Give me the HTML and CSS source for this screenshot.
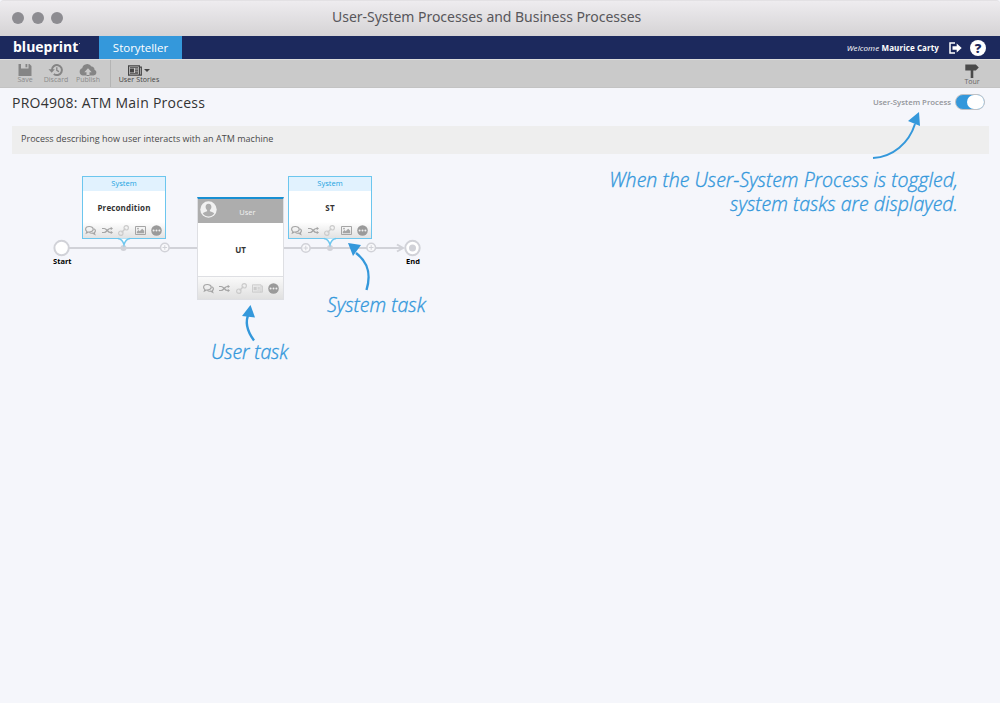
FILE: index.html
```
<!DOCTYPE html>
<html lang="en">
<head>
<meta charset="utf-8">
<title>User-System Processes and Business Processes</title>
<link rel="stylesheet" href="styles.css">
</head>
<body>
<svg class="defs" aria-hidden="true">
  <symbol id="chat" viewBox="0 0 11 10"><g fill="none" stroke="currentColor" stroke-width="1.200"><path d="M4.300 1C2 1 .6 2.300.6 3.800c0 1 .5 1.700 1.300 2.200L1.400 7.600 3.500 6.500C6.500 6.700 8.200 5.400 8.200 3.800S6.500 1 4.300 1z"/><path d="M8.700 3.200c1.100.4 1.700 1.100 1.700 2 0 .9-.5 1.600-1.200 2.100l.5 1.500-2-1.100c-1.400.2-2.700-.1-3.400-.8"/></g></symbol>
  <symbol id="shuffle" viewBox="0 0 11 10"><g fill="none" stroke="currentColor" stroke-width="1.200"><path d="M0 3h2.200c2.400 0 3.600 4 6 4h1.300M0 7h2.200c2.400 0 3.600-4 6-4h1.300"/></g><path fill="currentColor" d="M8.700 1.300l2.300 1.700-2.300 1.700zM8.700 5.300L11 7 8.700 8.700z"/></symbol>
  <symbol id="link" viewBox="0 0 11 11"><g fill="none" stroke="currentColor" stroke-width="1.200"><circle cx="2.800" cy="8.200" r="2.200"/><circle cx="8.200" cy="2.800" r="2.200"/><path d="M3.600 7.400l3.800-3.800" stroke-width="1.400"/></g></symbol>
  <symbol id="image" viewBox="0 0 11 10"><path fill="none" stroke="currentColor" d="M.5 1h10v8H.5z"/><path fill="currentColor" d="M1.800 7.800V6.200l1.700-1.600 1.200 1.200L7.200 3.300l2 2v2.500z"/><circle cx="3" cy="3.100" r=".9" fill="currentColor"/></symbol>
  <symbol id="dots" viewBox="0 0 11 11"><circle cx="5.500" cy="5.500" r="5.300" fill="currentColor"/><g fill="#eee"><circle cx="2.600" cy="5.500" r="1"/><circle cx="5.500" cy="5.500" r="1"/><circle cx="8.400" cy="5.500" r="1"/></g></symbol>
  <symbol id="news" viewBox="0 0 14 11"><path fill="none" stroke="currentColor" stroke-width="1.200" d="M.6 .8h10.800v9.400H.6zM11.600 2.200h1.700v8H11"/><path fill="currentColor" d="M2 3.500h4v4H2zM2 1.900h8v.8H2zM7 3.600h3v1H7zM7 5.200h3v1H7zM7 6.800h3v1H7zM2 8.300h8v.8H2z"/></symbol>
</svg>

<header class="window-bar">
  <div class="lights"><i></i><i></i><i></i></div>
  <h1 class="window-title">User-System Processes and Business Processes</h1>
</header>

<nav class="brand-bar">
  <div class="logo">blueprint<i></i></div>
  <div class="tab">Storyteller</div>
  <div class="account">
    <span class="welcome"><em>Welcome</em> <b>Maurice Carty</b></span>
    <svg class="logout" viewBox="0 0 13 12"><path d="M6 1H1v10h5" fill="none" stroke="#fff" stroke-width="1.500"/><path fill="#fff" d="M3.500 4.200h4.200V1.600L12.700 6l-5 4.400V7.800H3.500z"/></svg>
    <span class="help">?</span>
  </div>
</nav>

<div class="toolbar">
  <div class="tool save"><svg viewBox="0 0 14 12"><path fill="#858585" fill-rule="evenodd" d="M.5 0h11l2 2v10H.5zM3 0v4.500h7.500V0z"/><path fill="#858585" d="M7.500 0h1.800v3.300H7.500z"/></svg><span>Save</span></div>
  <div class="tool discard"><svg viewBox="0 0 14 12"><path fill="none" stroke="#858585" stroke-width="2" d="M2.900 6a5 5 0 1 1 1.900 4"/><path fill="#858585" d="M-.5 5.300h6.300L2.700 8.800z"/><path fill="none" stroke="#858585" stroke-width="1.300" d="M7.800 3.200v3.200l2.200 1.200"/></svg><span>Discard</span></div>
  <div class="tool publish"><svg viewBox="0 0 18 12"><path fill="#858585" d="M4 11.500A3.700 3.700 0 0 1 3.200 4.300 5 5 0 0 1 12.500 2.600a3.300 3.300 0 0 1 3 3.100A3 3 0 0 1 14.500 11.500h-4V8.300h2.200L9 4.300 5.300 8.300h2.200v3.200z"/><path fill="#858585" d="M7.500 11h3v1h-3z"/></svg><span>Publish</span></div>
  <div class="tool stories"><div class="stories-icon"><svg viewBox="0 0 14 11"><use href="#news"/></svg><i class="caret"></i></div><span>User Stories</span></div>
  <div class="tool tour"><svg viewBox="0 0 14 14"><path fill="#4b4b4b" d="M.3.500h10.500l3 2.900-3 3H.3zM5.700 6h2.600v8H5.700z"/></svg><span>Tour</span></div>
</div>

<main class="page">
  <div class="heading">
    <h2>PRO4908: ATM Main Process</h2>
    <div class="switch-row"><span>User-System Process</span><div class="switch"><i></i></div></div>
  </div>
  <p class="description">Process describing how user interacts with an ATM machine</p>

  <section class="canvas">
    <svg class="wires" viewBox="0 0 1000 549">
      <g fill="none" stroke="#d1d2d8" stroke-width="2">
        <path d="M69 94H403M397 90.500l6 3.500-6 3.500"/>
        <g fill="#f9f9fb" stroke-width="1.600"><circle cx="164.800" cy="93.500" r="4.300"/><circle cx="305.800" cy="94" r="4.300"/><circle cx="371.200" cy="93.500" r="4.300"/></g>
        <path stroke-width="1" d="M162.500 93.500h4.600M164.800 91.200v4.600M303.500 94h4.600M305.800 91.700v4.600M368.900 93.500h4.600M371.200 91.200v4.600"/>
        <circle cx="61.600" cy="94" r="7.200" fill="#fff"/><circle cx="412.500" cy="94" r="7.200" fill="#fff"/>
      </g>
      <g fill="#d1d2d8"><circle cx="123.500" cy="94" r="3"/><circle cx="330" cy="94" r="3"/><circle cx="412.500" cy="94" r="3.500"/></g>
    </svg>
    <span class="label start">Start</span>
    <span class="label end">End</span>

    <article class="system-task precondition">
      <header>System</header><strong>Precondition</strong>
      <footer><svg><use href="#chat"/></svg><svg><use href="#shuffle"/></svg><svg class="faint"><use href="#link"/></svg><svg><use href="#image"/></svg><svg class="more"><use href="#dots"/></svg></footer>
      <svg class="tail" viewBox="0 0 14 8"><path fill="#fff" stroke="#6cc6ee" stroke-width="1.400" d="M1 .5C4 1 6 3 7 6.800 8 3 10 1 13 .5"/></svg>
    </article>
    <article class="user-task">
      <header><svg class="avatar" viewBox="0 0 17 17"><circle cx="8.500" cy="8.500" r="8.200" fill="#f1f1f1"/><path fill="#adadad" d="M8.500 2.800c-2 0-3 1.400-2.900 3.200.1 1.400.6 2.400 1.500 3.100v1.100c-2 .8-3.600 1-4.300 2.400a7 7 0 0 0 11.400 0c-.7-1.400-2.300-1.600-4.300-2.400V9.100c.9-.7 1.400-1.700 1.500-3.100.1-1.800-.9-3.200-2.900-3.200z"/></svg>User</header>
      <strong>UT</strong>
      <footer><svg><use href="#chat"/></svg><svg><use href="#shuffle"/></svg><svg class="faint"><use href="#link"/></svg><svg class="faint"><use href="#news"/></svg><svg class="more"><use href="#dots"/></svg></footer>
    </article>
    <article class="system-task st">
      <header>System</header><strong>ST</strong>
      <footer><svg><use href="#chat"/></svg><svg><use href="#shuffle"/></svg><svg class="faint"><use href="#link"/></svg><svg><use href="#image"/></svg><svg class="more"><use href="#dots"/></svg></footer>
      <svg class="tail" viewBox="0 0 14 8"><path fill="#fff" stroke="#6cc6ee" stroke-width="1.400" d="M1 .5C4 1 6 3 7 6.800 8 3 10 1 13 .5"/></svg>
    </article>

    <svg class="arrows" viewBox="0 0 1000 549">
      <g fill="none" stroke="#3498db" stroke-width="2"><path d="M873 4C893 3 909-11 915-30"/><path stroke-width="2.400" d="M366.500 136C371 121 369 109 356 99"/><path stroke-width="2.400" d="M254 186.500C247 177 245 167 249 159"/></g>
      <path fill="#3498db" d="M919-42l1 14-12-5zM348 89l13 2-8 11zM250.500 151l4.500 12.500-13-1.500z"/>
    </svg>
    <p class="note toggle-note">When the User-System Process is toggled,<br>system tasks are displayed.</p>
    <p class="note system-note">System task</p>
    <p class="note user-note">User task</p>
  </section>
</main>
</body>
</html>
```
FILE: styles.css
```
* { box-sizing: border-box; }
body { margin: 0; width: 1000px; height: 703px; overflow: hidden; background: #f5f6fb; font-family: "Open Sans", "Noto Sans", sans-serif; color: #333; }
svg { display: block; overflow: visible; }
i { display: block; }
h1, h2, p { margin: 0; font-weight: 400; }
.defs { position: absolute; width: 0; height: 0; }

.window-bar { display: grid; grid-template-columns: 332px 1fr; height: 36px; background: linear-gradient(#eeecef, #d5d3d5); border-top: 1px solid #e3e1e4; border-radius: 4px 4px 0 0; }
.lights { display: flex; gap: 7.500px; padding: 11px 0 0 12px; }
.lights i { width: 12px; height: 12px; border-radius: 50%; background: #8d8c91; }
.window-title { font: 14px/32px "Noto Sans", sans-serif; letter-spacing: -0.03px; color: #58575b; white-space: nowrap; }

.brand-bar { display: flex; height: 23px; background: #1c295d; color: #fff; }
.logo { display: flex; width: 99px; padding-left: 13px; font: 700 14px/21px "Open Sans", sans-serif; }
.logo i { width: 1px; height: 1px; margin: 7px 0 0 1px; background: #aab0cc; }
.tab { width: 83px; background: #3498db; font-size: 11.500px; line-height: 23px; text-align: center; }
.account { display: flex; align-items: center; margin-left: auto; padding-right: 14px; }
.welcome { font-size: 8px; letter-spacing: 0.1px; margin-right: 10px; white-space: nowrap; }
.logout { width: 13px; height: 12px; margin-right: 8px; }
.help { width: 16px; height: 16px; border-radius: 50%; background: #fff; color: #1c295d; font-weight: 800; font-size: 13px; line-height: 16px; text-align: center; }

.toolbar { display: flex; height: 29px; background: #cacaca; border-top: 1px solid #dcdcdc; border-bottom: 1px solid #c3c3c3; }
.tool { display: flex; flex-direction: column; align-items: center; padding-top: 4px; font-size: 7px; line-height: 8px; color: #8b8b8b; white-space: nowrap; }
.tool svg { width: 14px; height: 12px; }
.save { width: 26px; margin-left: 12px; }
.discard { width: 36px; }
.publish { width: 28px; }
.publish svg { width: 18px; }
.stories { width: 57px; margin-left: 8px; border-left: 1px solid #b4b4b4; color: #444; letter-spacing: 0.1px; }
.stories-icon { display: flex; align-items: center; gap: 2px; height: 12px; }
.stories-icon svg { height: 11px; }
.caret { border: 3px solid transparent; border-top-color: #444; border-bottom: 0; }
.tour { margin-left: auto; width: 30px; margin-right: 13px; padding-top: 4px; color: #666; }
.tour svg { height: 14px; }

.heading { display: flex; justify-content: space-between; height: 38px; padding: 5px 15px 0 12px; }
.heading h2 { font-size: 14px; line-height: 19px; letter-spacing: 0.260px; color: #333; }
.switch-row { display: flex; gap: 4px; height: 18px; align-items: center; font-size: 7.800px; font-weight: 600; color: #929499; }
.switch { width: 30px; height: 16px; border-radius: 8px; border: 1px solid #bfc1c5; background: #3498db; display: flex; justify-content: flex-end; }
.switch i { width: 17px; height: 14px; border-radius: 7px; background: #fff; }
.description { height: 28px; margin: 0 11px 0 12px; padding-left: 9px; background: #eee; font-size: 9px; line-height: 25px; letter-spacing: 0.030px; color: #4a4a4a; }

.canvas { position: relative; height: 549px; }
.wires, .arrows { position: absolute; left: 0; top: 0; width: 1000px; height: 549px; }
.label { position: absolute; top: 102px; font-size: 7.500px; line-height: 10px; font-weight: 700; color: #000; }
.start { left: 53px; }
.end { left: 406px; }
.system-task, .user-task { position: absolute; display: flex; flex-direction: column; background: #fff; text-align: center; }
.system-task { top: 22px; width: 84px; height: 63px; border: 1px solid #6cc6ee; }
.precondition { left: 82px; }
.st { left: 288px; }
.system-task header { height: 14px; background: #e1f2fe; color: #1ba3e1; font-size: 7.500px; line-height: 13px; }
.system-task strong { font-size: 8px; line-height: 34px; height: 31px; letter-spacing: 0.150px; }
footer { display: flex; justify-content: space-between; align-items: center; color: #a5a5a5; }
footer svg { width: 11px; height: 11px; }
footer .faint { color: #cbcbcb; }
footer .more { color: #9a9a9a; }
.system-task footer { flex: 1; padding: 0 3px 0 2px; background: linear-gradient(#fff, #e2e2e2); }
.tail { position: absolute; left: 34px; top: 61px; width: 14px; height: 8px; }
.user-task { left: 197px; top: 43px; width: 87px; height: 103px; border: 1px solid #dedfe3; border-top: 2px solid #178fd2; }
.user-task header { height: 24px; background: #adadad; color: #f1f1f1; font-size: 7.500px; line-height: 27px; padding-left: 14px; }
.avatar { position: absolute; left: 2px; top: 2px; width: 17px; height: 17px; }
.user-task strong { height: 54px; font-size: 8px; line-height: 54px; border-bottom: 1px solid #dedfe3; }
.user-task footer { flex: 1; padding: 1px 4px 0 5px; background: linear-gradient(#fafafa, #e0e0e0); }

.note { position: absolute; font-size: 19.500px; line-height: 24px; letter-spacing: 0.030px; font-style: italic; font-weight: 300; -webkit-text-stroke: 0.350px #3498db; color: #3498db; white-space: nowrap; }
.toggle-note { right: 42px; top: 14px; text-align: right; }
.system-note { left: 327px; top: 139px; }
.user-note { left: 211px; top: 186px; letter-spacing: -0.1px; }
```
